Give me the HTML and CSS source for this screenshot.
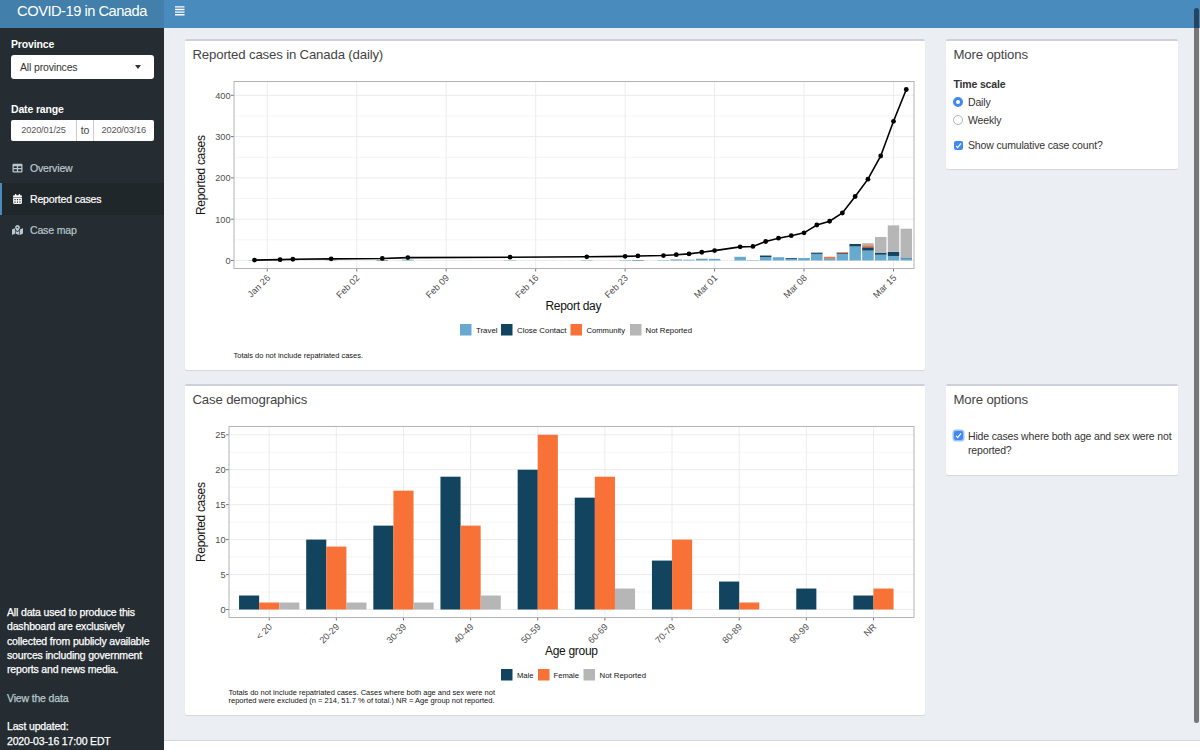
FILE: index.html
```html
<!DOCTYPE html>
<html lang="en">
<head>
    <meta charset="UTF-8">
    <meta name="viewport" content="width=device-width, initial-scale=1.0">
    <title>COVID-19 in Canada</title>
    <link rel="stylesheet" href="styles.css">
</head>
<body>
    <header class="main-header">
        <a href="#" class="logo"><span>COVID-19 in Canada</span></a>
        <nav class="navbar">
            <a href="#" class="sidebar-toggle" aria-label="Toggle navigation">
                <svg viewBox="0 0 10 10"><path d="M0 .9h9.500M0 3.500h9.500M0 6.100h9.500M0 8.700h9.500"/></svg>
            </a>
        </nav>
    </header>
    <div class="wrapper">
        <aside class="sidebar">
            <form class="filters">
                <label class="filters__label">Province</label>
                <div class="select">
                    <span>All provinces</span>
                    <i class="caret"></i>
                </div>
                <label class="filters__label filters__label--date">Date range</label>
                <div class="daterange">
                    <span class="daterange__date">2020/01/25</span>
                    <span class="daterange__to">to</span>
                    <span class="daterange__date">2020/03/16</span>
                </div>
            </form>
            <ul class="menu">
                <li class="menu__item">
                    <a href="#">
                        <svg viewBox="0 0 512 512"><path d="M464 32H48C21.5 32 0 53.5 0 80v352c0 26.5 21.5 48 48 48h416c26.5 0 48-21.5 48-48V80c0-26.5-21.5-48-48-48zM224 416H64v-96h160v96zm0-160H64v-96h160v96zm224 160H288v-96h160v96zm0-160H288v-96h160v96z"/></svg>
                        <span>Overview</span>
                    </a>
                </li>
                <li class="menu__item menu__item--active">
                    <a href="#">
                        <svg viewBox="0 0 448 512"><path fill-rule="evenodd" d="M0 464c0 26.5 21.5 48 48 48h352c26.5 0 48-21.5 48-48V192H0v272zM64 256h64v64H64zM192 256h64v64h-64zM320 256h64v64h-64zM64 384h64v64H64zM192 384h64v64h-64zM320 384h64v64h-64zM400 64h-48V16c0-8.8-7.2-16-16-16h-32c-8.8 0-16 7.2-16 16v48H160V16c0-8.8-7.2-16-16-16h-32c-8.8 0-16 7.2-16 16v48H48C21.5 64 0 85.5 0 112v48h448v-48c0-26.5-21.5-48-48-48z"/></svg>
                        <span>Reported cases</span>
                    </a>
                </li>
                <li class="menu__item">
                    <a href="#">
                        <svg viewBox="0 0 576 512"><path d="M288 0c-69.59 0-126 56.41-126 126 0 56.26 82.35 158.8 113.9 196.02 6.39 7.54 17.82 7.54 24.2 0C331.65 284.8 414 182.26 414 126 414 56.41 357.59 0 288 0zm0 168c-23.2 0-42-18.8-42-42s18.8-42 42-42 42 18.8 42 42-18.8 42-42 42zM20.12 215.95A32 32 0 0 0 0 245.66v250.32c0 11.32 11.43 19.06 21.94 14.86L160 448V214.92c-8.84-15.98-16.07-31.54-21.25-46.42L20.12 215.95zM288 359.67c-14.07 0-27.38-6.18-36.51-16.96-19.66-23.2-40.57-49.62-59.49-76.72v182l192 64V266c-18.92 27.09-39.82 53.52-59.49 76.72-9.13 10.77-22.44 16.95-36.51 16.95zm266.06-198.51L416 224v288l139.88-55.95A32 32 0 0 0 576 426.34V176.02c0-11.32-11.43-19.06-21.94-14.86z"/></svg>
                        <span>Case map</span>
                    </a>
                </li>
            </ul>
            <div class="about">
                <p>All data used to produce this<br>dashboard are exclusively<br>collected from publicly available<br>sources including government<br>reports and news media.</p>
                <p><a href="#">View the data</a></p>
                <p>Last updated:<br>2020-03-16 17:00 EDT</p>
            </div>
        </aside>
        <div class="page">
            <main class="content">
                <section class="box box--chart">
                    <h3 class="box__title"><span>Reported cases in Canada (daily)</span></h3>
                    <svg class="chart" id="cases-chart" viewBox="0 0 740 299"></svg>
                </section>
                <section class="box box--scale">
                    <h3 class="box__title"><span>More options</span></h3>
                    <div class="options">
                        <p class="options__label">Time scale</p>
                        <div class="option"><i class="radio radio--on"></i><span>Daily</span></div>
                        <div class="option"><i class="radio"></i><span>Weekly</span></div>
                        <div class="option option--check">
                            <i class="check"><svg viewBox="0 0 9 9"><path d="M2 4.8l1.7 1.8L7 2.3"/></svg></i>
                            <span>Show cumulative case count?</span>
                        </div>
                    </div>
                </section>
                <section class="box box--chart">
                    <h3 class="box__title"><span>Case demographics</span></h3>
                    <svg class="chart" id="demo-chart" viewBox="0 0 740 299"></svg>
                </section>
                <section class="box box--hide">
                    <h3 class="box__title"><span>More options</span></h3>
                    <div class="options">
                        <div class="option option--top">
                            <i class="check check--focus"><svg viewBox="0 0 9 9"><path d="M2 4.8l1.7 1.8L7 2.3"/></svg></i>
                            <span>Hide cases where both age and sex were not<br>reported?</span>
                        </div>
                    </div>
                </section>
            </main>
            <footer class="footer"></footer>
        </div>
    </div>
    <div class="scroll-thumb"></div>
    <script src="charts.js"></script>
</body>
</html>
```
FILE: styles.css
```css
* {
    box-sizing: border-box;
}
body {
    margin: 0;
    height: 750px;
    overflow: hidden;
    position: relative;
    background: #ebeef3;
    color: #333;
    font-family: "Liberation Sans", Arial, sans-serif;
    font-size: 10.5px;
    line-height: 14.3px;
    letter-spacing: -.16px;
}
a {
    text-decoration: none;
}
p, h3, ul {
    margin: 0;
    padding: 0;
}

/* header */
.main-header {
    display: flex;
    height: 28px;
}
.logo {
    width: 164px;
    height: 28px;
    padding-top: 1px;
    background: #427fab;
    color: #fff;
    font-size: 14.7px;
    letter-spacing: -.5px;
    line-height: 20px;
    text-align: center;
    white-space: nowrap;
}
.navbar {
    flex: 1;
    background: #4a8bbd;
}
.sidebar-toggle {
    display: block;
    width: 10px;
    margin: 6px 0 0 10.5px;
}
.sidebar-toggle svg {
    display: block;
    width: 10px;
    height: 10px;
    stroke: #fff;
    stroke-width: 1.4;
}

.wrapper {
    display: flex;
    height: 722px;
}

/* sidebar */
.sidebar {
    width: 164px;
    display: flex;
    flex-direction: column;
    background: #252d32;
    color: #fff;
}
.filters {
    padding: 9px 10.5px 0 11px;
}
.filters__label {
    display: block;
    height: 18px;
    font-weight: bold;
}
.filters__label--date {
    margin-top: 23px;
}
.select {
    height: 24px;
    padding: 0 12.5px 0 9px;
    display: flex;
    justify-content: space-between;
    align-items: center;
    background: #fff;
    border-radius: 3px;
    color: #333;
}
.caret {
    border: 3.5px solid transparent;
    border-top: 4px solid #333;
    border-bottom: 0;
}
.daterange {
    height: 21px;
    display: grid;
    grid-template-columns: 65px 18px 1fr;
    background: #fff;
    border-radius: 2px;
    color: #555;
    line-height: 21px;
    text-align: center;
}
.daterange__date {
    font-size: 9.2px;
}
.daterange__to {
    border-left: 1px solid #ccc;
    border-right: 1px solid #ccc;
    color: #444;
}
.menu {
    margin-top: 11px;
    list-style: none;
}
.menu__item a {
    height: 31.4px;
    padding-left: 10px;
    display: flex;
    align-items: center;
    border-left: 2px solid transparent;
    color: #b8c7ce;
    -webkit-text-stroke: .2px;
}
.menu__item svg {
    width: 11px;
    height: 10px;
    margin-right: 7px;
    fill: currentColor;
}
.menu__item--active a {
    border-left-color: #4a8bbd;
    background: #1f272b;
    color: #fff;
}
.about {
    margin-top: auto;
    padding: 0 0 2px 7px;
    white-space: nowrap;
    -webkit-text-stroke: .25px;
}
.about p + p {
    margin-top: 14.3px;
}
.about a {
    color: #b8c7ce;
}

/* content */
.page {
    flex: 1;
    display: flex;
    flex-direction: column;
}
.content {
    flex: 1;
    padding: 11px 22px 0 21px;
    display: grid;
    grid-template-columns: 740px 232px;
    grid-template-rows: 332px 331px;
    gap: 13px 21px;
    align-items: start;
}
.footer {
    height: 10px;
    background: #fff;
    border-top: 1px solid #d2d6de;
}
.box {
    height: 331px;
    background: #fff;
    border-top: 2px solid #cdd0da;
    border-radius: 2px;
    box-shadow: 0 1px 1px rgba(0, 0, 0, .1);
}
.box--scale {
    height: 130px;
}
.box--hide {
    height: 91px;
}
.box__title {
    height: 30px;
    padding: 6px 7.5px 0;
    color: #444;
    font-size: 13.2px;
    font-weight: normal;
    line-height: 16px;
}
.chart {
    display: block;
    width: 740px;
    height: 299px;
}
.options {
    padding: 6px 6px 0 7px;
}
.options__label {
    height: 16px;
    padding-left: .5px;
    font-weight: bold;
}
.option {
    height: 18px;
    display: flex;
    align-items: center;
    gap: 5px;
}
.option--check {
    margin-top: 7px;
}
.option--top {
    height: auto;
    padding-top: 7px;
    align-items: flex-start;
    white-space: nowrap;
}
.radio {
    flex: none;
    width: 10px;
    height: 10px;
    background: #fff;
    border: 1px solid #b5b5b5;
    border-radius: 50%;
}
.radio--on {
    border: 3.5px solid #4089f5;
}
.check {
    flex: none;
    width: 9px;
    height: 9px;
    margin: 0 .5px;
    background: #4089f5;
    border-radius: 2px;
}
.check svg {
    display: block;
    fill: none;
    stroke: #fff;
    stroke-width: 1.2;
}
.check--focus {
    margin-top: 2px;
    box-shadow: 0 0 0 1.5px #9cc3f8;
}
.scroll-thumb {
    position: absolute;
    top: 8px;
    right: 1px;
    width: 5px;
    height: 715px;
    border-radius: 3px;
    background: rgba(0, 0, 0, .5);
}

/* charts */
.chart text {
    fill: #111;
    letter-spacing: 0;
}
.chart .panel {
    fill: none;
    stroke: #b3b3b3;
}
.chart .grid {
    stroke: #ececec;
}
.chart .grid--minor {
    stroke: #f5f5f5;
}
.chart .tick {
    stroke: #777;
}
.chart .tick-label {
    fill: #4d4d4d;
    font-size: 9.2px;
}
.chart .axis-title {
    font-size: 12px;
    text-anchor: middle;
}
.chart .legend {
    font-size: 8px;
}
.chart .caption {
    font-size: 7.4px;
}
.chart .line {
    fill: none;
    stroke: #000;
    stroke-width: 1.6;
}
.travel {
    fill: #67a9cf;
}
.contact, .male {
    fill: #12445f;
}
.community, .female {
    fill: #f87137;
}
.missing {
    fill: #b6b6b6;
}
```
FILE: charts.js
```js
const SVG = 'http://www.w3.org/2000/svg'

function add(parent, tag, attrs, text) {
    const el = document.createElementNS(SVG, tag)
    for (const key in attrs) el.setAttribute(key, attrs[key])
    if (text) el.textContent = text
    parent.appendChild(el)
    return el
}

function line(svg, x1, y1, x2, y2, cls) {
    add(svg, 'line', { x1, y1, x2, y2, class: cls })
}

function bar(svg, x, y, width, height, cls) {
    add(svg, 'rect', { x, y, width, height, class: cls })
}

// text stretched to a fixed length
function label(svg, x, y, text, len, cls) {
    add(svg, 'text', { x, y, textLength: len, lengthAdjust: 'spacingAndGlyphs', class: cls }, text)
}

function slanted(svg, x, y, text) {
    add(svg, 'text', {
        transform: `translate(${x} ${y}) rotate(-45)`,
        'text-anchor': 'end',
        class: 'tick-label'
    }, text)
}

function yAxis(svg, p, step, max, y) {
    for (let v = 0; v <= max; v += step) {
        if (v < max) line(svg, p.left, y(v + step / 2), p.right, y(v + step / 2), 'grid grid--minor')
        line(svg, p.left, y(v), p.right, y(v), 'grid')
        line(svg, p.left - 3, y(v), p.left, y(v), 'tick')
        add(svg, 'text', { x: p.left - 3.5, y: y(v) + 3.3, 'text-anchor': 'end', class: 'tick-label' }, String(v))
    }
}

// reported cases: [day since Jan 25, cumulative, travel, contact, community, not reported]
const cases = [
    [0, 1, 1, 0, 0, 0], [2, 2, 1, 0, 0, 0], [3, 3, 1, 0, 0, 0], [6, 4, 1, 0, 0, 0],
    [10, 5, 0, 1, 0, 0], [12, 7, 2, 0, 0, 0], [20, 8, 1, 0, 0, 0], [26, 9, 1, 0, 0, 0],
    [29, 10, 1, 0, 0, 0], [30, 11, 0, 1, 0, 0], [32, 12, 1, 0, 0, 0], [33, 14, 1, 1, 0, 0],
    [34, 16, 2, 0, 0, 0], [35, 20, 3, 1, 0, 0], [36, 24, 4, 0, 0, 0], [38, 33, 9, 0, 0, 0],
    [39, 34, 1, 0, 0, 0], [40, 46, 8, 4, 0, 0], [41, 54, 8, 0, 0, 0], [42, 60, 4, 2, 0, 0],
    [43, 67, 6, 0, 0, 0], [44, 86, 16, 3, 0, 0], [45, 95, 4, 1, 4, 0], [46, 115, 16, 2, 2, 0],
    [47, 155, 34, 6, 0, 0], [48, 197, 24, 8, 5, 5], [49, 253, 14, 5, 0, 38],
    [50, 337, 11, 10, 0, 64], [51, 414, 5, 2, 0, 70]
]

function drawCases() {
    const svg = document.querySelector('#cases-chart')
    const p = { left: 49, right: 729, top: 10.5, bottom: 197.5 }
    const x = d => 69.5 + d * 12.78
    const y = v => 189.5 - v * 0.413

    yAxis(svg, p, 100, 400, y)
    const weeks = ['Jan 26', 'Feb 02', 'Feb 09', 'Feb 16', 'Feb 23', 'Mar 01', 'Mar 08', 'Mar 15']
    weeks.forEach((week, i) => {
        const wx = x(1 + i * 7)
        line(svg, wx, p.top, wx, p.bottom, 'grid')
        line(svg, wx, p.bottom, wx, p.bottom + 3, 'tick')
        slanted(svg, wx + 3.5, p.bottom + 10, week)
    })

    cases.forEach(([day, total, ...parts]) => {
        let sum = 0
        parts.forEach((n, i) => {
            sum += n
            if (n) bar(svg, x(day) - 5.75, y(sum), 11.5, n * 0.413, ['travel', 'contact', 'community', 'missing'][i])
        })
    })
    add(svg, 'polyline', { points: cases.map(c => `${x(c[0])},${y(c[1])}`).join(' '), class: 'line' })
    cases.forEach(c => add(svg, 'circle', { cx: x(c[0]), cy: y(c[1]), r: 2.4 }))
    add(svg, 'rect', { x: p.left, y: p.top, width: p.right - p.left, height: p.bottom - p.top, class: 'panel' })

    add(svg, 'text', { transform: 'translate(20 104) rotate(-90)', textLength: 80, class: 'axis-title' }, 'Reported cases')
    add(svg, 'text', { x: 388.5, y: 238.5, textLength: 56, class: 'axis-title' }, 'Report day')

    bar(svg, 275, 253, 11.5, 11.5, 'travel')
    label(svg, 291, 262, 'Travel', 21.5, 'legend')
    bar(svg, 316, 253, 11.5, 11.5, 'contact')
    label(svg, 332, 262, 'Close Contact', 49.5, 'legend')
    bar(svg, 385.5, 253, 11.5, 11.5, 'community')
    label(svg, 401.5, 262, 'Community', 38.5, 'legend')
    bar(svg, 445, 253, 11.5, 11.5, 'missing')
    label(svg, 460.5, 262, 'Not Reported', 46.5, 'legend')
    label(svg, 48.5, 287, 'Totals do not include repatriated cases.', 129.5, 'caption')
}

// age groups: male, female, sex not reported
const ages = [
    ['< 20', 2, 1, 1], ['20-29', 10, 9, 1], ['30-39', 12, 17, 1], ['40-49', 19, 12, 2],
    ['50-59', 20, 25], ['60-69', 16, 19, 3], ['70-79', 7, 10], ['80-89', 4, 1],
    ['90-99', 3], ['NR', 2, 3]
]

function drawDemographics() {
    const svg = document.querySelector('#demo-chart')
    const p = { left: 44, right: 729, top: 10.5, bottom: 201.5 }
    const y = v => 193.5 - v * 6.99
    const w = 20.1

    yAxis(svg, p, 5, 25, y)
    ages.forEach(([age, ...counts], i) => {
        const cx = 84.2 + i * 67.14
        line(svg, cx, p.top, cx, p.bottom, 'grid')
        line(svg, cx, p.bottom, cx, p.bottom + 3, 'tick')
        slanted(svg, cx + 3.5, p.bottom + 10, age)
        counts.forEach((n, k) => {
            bar(svg, cx - counts.length * w / 2 + k * w, y(n), w, n * 6.99, ['male', 'female', 'missing'][k])
        })
    })
    add(svg, 'rect', { x: p.left, y: p.top, width: p.right - p.left, height: p.bottom - p.top, class: 'panel' })

    add(svg, 'text', { transform: 'translate(20 106) rotate(-90)', textLength: 80, class: 'axis-title' }, 'Reported cases')
    add(svg, 'text', { x: 386.5, y: 238.5, textLength: 53, class: 'axis-title' }, 'Age group')

    bar(svg, 316, 253, 11.5, 11.5, 'male')
    label(svg, 332, 262, 'Male', 16.5, 'legend')
    bar(svg, 353, 253, 11.5, 11.5, 'female')
    label(svg, 368.5, 262, 'Female', 25.5, 'legend')
    bar(svg, 398.5, 253, 11.5, 11.5, 'missing')
    label(svg, 414.5, 262, 'Not Reported', 46.5, 'legend')
    label(svg, 43.5, 279, 'Totals do not include repatriated cases. Cases where both age and sex were not', 266.5, 'caption')
    label(svg, 43.5, 287, 'reported were excluded (n = 214, 51.7 % of total.) NR = Age group not reported.', 266, 'caption')
}

drawCases()
drawDemographics()
```
